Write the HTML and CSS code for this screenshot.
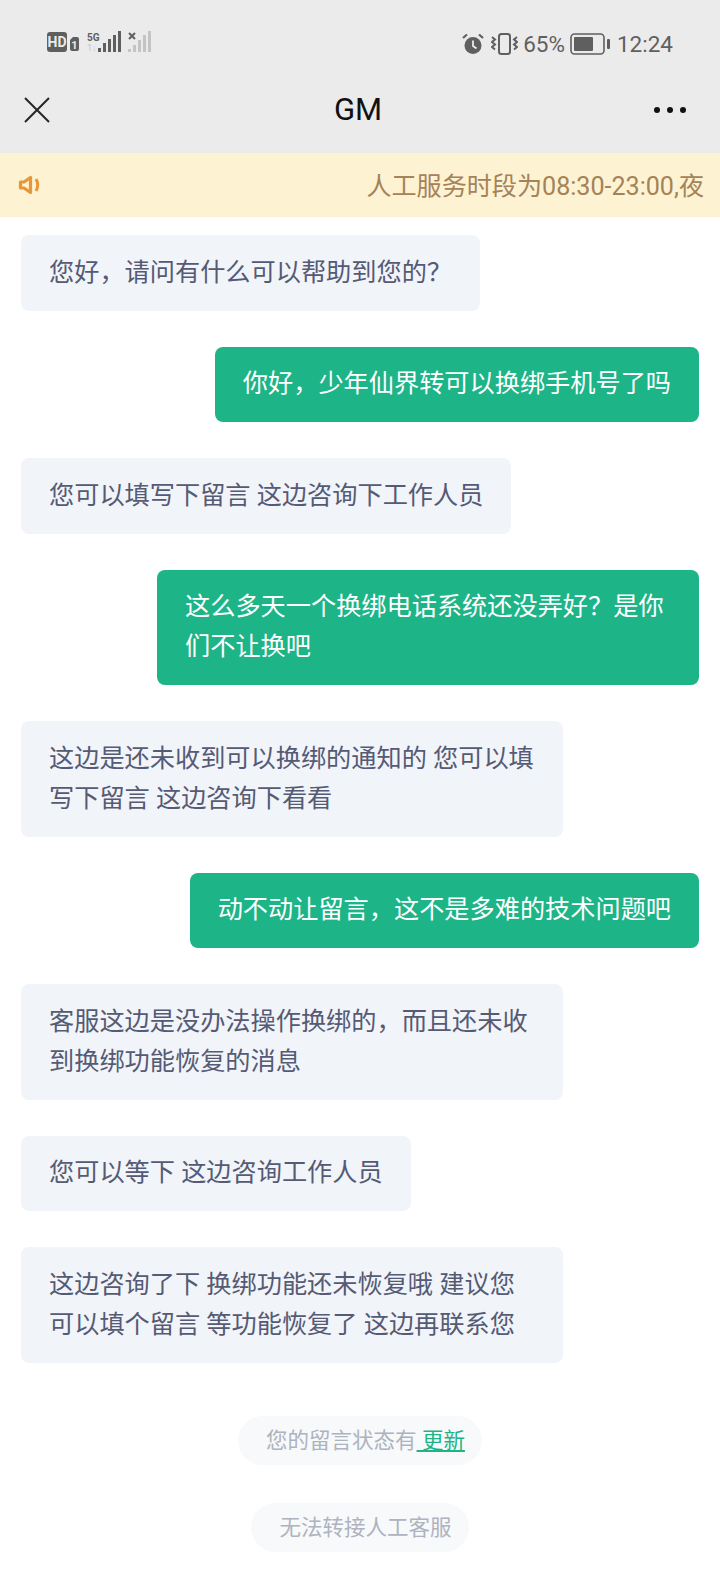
FILE: index.html
```html
<!DOCTYPE html>
<html lang="zh-CN">
<head>
  <meta charset="UTF-8">
  <title>GM</title>
  <link rel="stylesheet" href="styles.css">
</head>
<body>

  <!-- Status bar -->
  <div class="statusbar">
    <div class="status-left">
      <svg class="hd-icon" width="33" height="20" viewBox="0 0 33 20">
        <rect x="0" y="0" width="20" height="20" rx="3" fill="#5f5f5f"/>
        <text x="10" y="15" class="hd-text" text-anchor="middle">HD</text>
        <path d="M23 8 l3 -3 h4 a2 2 0 0 1 2 2 v10 a2 2 0 0 1 -2 2 h-5 a2 2 0 0 1 -2 -2 z" fill="#5f5f5f"/>
        <text x="27.5" y="16.5" class="sim-text" text-anchor="middle">1</text>
      </svg>
      <svg class="signal" width="34" height="22" viewBox="0 0 34 22">
        <text x="0" y="9.5" class="five-g">5G</text>
        <text x="0" y="20" class="updown">1↓</text>
        <rect x="11" y="17" width="3" height="4" fill="#5f5f5f"/>
        <rect x="16" y="12" width="3" height="9" fill="#5f5f5f"/>
        <rect x="21" y="8" width="3" height="13" fill="#5f5f5f"/>
        <rect x="26" y="4" width="3" height="17" fill="#5f5f5f"/>
        <rect x="31" y="0" width="3" height="21" fill="#5f5f5f"/>
      </svg>
      <svg class="signal-off" width="23" height="22" viewBox="0 0 23 22">
        <path d="M1 2 l6 6 M7 2 l-6 6" stroke="#5f5f5f" stroke-width="2"/>
        <rect x="0" y="18" width="3" height="3" fill="#c4c4c4"/>
        <rect x="5" y="14" width="3" height="7" fill="#c4c4c4"/>
        <rect x="10" y="9" width="3" height="12" fill="#c4c4c4"/>
        <rect x="15" y="4" width="3" height="17" fill="#c4c4c4"/>
        <rect x="20" y="0" width="3" height="21" fill="#c4c4c4"/>
      </svg>
    </div>
    <div class="status-right">
      <svg width="22" height="22" viewBox="0 0 22 22">
        <circle cx="11" cy="12.5" r="8.5" fill="#5f5f5f"/>
        <path d="M11 7.500 v5.500 l3.500 2.500" stroke="#ebebeb" stroke-width="1.800" fill="none"/>
        <path d="M1 5 l4 -3.500 M21 5 l-4 -3.500" stroke="#5f5f5f" stroke-width="2.200" fill="none"/>
      </svg>
      <svg class="vibrate" width="27" height="22" viewBox="0 0 27 22">
        <rect x="8" y="1" width="11" height="20" rx="2.500" fill="none" stroke="#5f5f5f" stroke-width="2"/>
        <path d="M1 4 l3 2.500 -3 2.500 3 2.500 -3 2.500 3 2.500" fill="none" stroke="#5f5f5f" stroke-width="2"/>
        <path d="M26 4 l-3 2.500 3 2.500 -3 2.500 3 2.500 -3 2.500" fill="none" stroke="#5f5f5f" stroke-width="2"/>
      </svg>
      <span class="battery-pct">65%</span>
      <svg class="battery" width="40" height="22" viewBox="0 0 40 22">
        <rect x="1" y="1" width="33" height="20" rx="3.500" fill="none" stroke="#5f5f5f" stroke-width="1.600"/>
        <rect x="4" y="4" width="19" height="14" rx="1" fill="#5f5f5f"/>
        <rect x="37" y="6" width="3" height="10" rx="1" fill="#5f5f5f"/>
      </svg>
      <span class="clock">12:24</span>
    </div>
  </div>

  <!-- Title bar -->
  <div class="titlebar">
    <svg width="26" height="26" viewBox="0 0 26 26">
      <path d="M1 1 L25 25 M25 1 L1 25" stroke="#262626" stroke-width="2" fill="none"/>
    </svg>
    <div class="title">GM</div>
    <div class="more"><i></i><i></i><i></i></div>
  </div>

  <!-- Notice -->
  <div class="notice">
    <svg width="23" height="20" viewBox="0 0 23 20">
      <path d="M2.500 7 h3.500 l6.500 -4.500 v15 l-6.500 -4.500 h-3.500 z" fill="none" stroke="#e8963a" stroke-width="3.200" stroke-linejoin="round"/>
      <path d="M18 4 q3.500 6 0 12" fill="none" stroke="#e8963a" stroke-width="3"/>
    </svg>
    <div class="notice-text">人工服务时段为08:30-23:00,夜</div>
  </div>

  <!-- Messages -->
  <main class="chat">
    <div class="msg them">您好，请问有什么可以帮助到您的？</div>
    <div class="msg me">你好，少年仙界转可以换绑手机号了吗</div>
    <div class="msg them">您可以填写下留言 这边咨询下工作人员</div>
    <div class="msg me">这么多天一个换绑电话系统还没弄好？是你们不让换吧</div>
    <div class="msg them">这边是还未收到可以换绑的通知的 您可以填写下留言 这边咨询下看看</div>
    <div class="msg me">动不动让留言，这不是多难的技术问题吧</div>
    <div class="msg them">客服这边是没办法操作换绑的，而且还未收到换绑功能恢复的消息</div>
    <div class="msg them">您可以等下 这边咨询工作人员</div>
    <div class="msg them">这边咨询了下 换绑功能还未恢复哦 建议您可以填个留言 等功能恢复了 这边再联系您</div>
  </main>

  <!-- Bottom tips -->
  <div class="tips">
    <div class="tip tip-update">您的留言状态有<a class="tip-link" href="#"> 更新</a></div>
    <div class="tip tip-noagent">无法转接人工客服</div>
  </div>

</body>
</html>
```

FILE: styles.css
```css
* {
  box-sizing: border-box;
}
html, body {
  margin: 0;
  height: 1592px;
  overflow: hidden;
}
body {
  background-color: #fff;
  font-family: Roboto, "Noto Sans CJK SC", sans-serif;
}
svg {
  display: block;
  flex: none;
}

/* status bar */
.statusbar {
  height: 72px;
  padding: 30px 47px 0 47px;
  background-color: #ebebeb;
  display: flex;
  justify-content: space-between;
  align-items: flex-start;
}
.status-left {
  display: flex;
  align-items: center;
  gap: 7px;
  height: 24px;
}
.status-right {
  display: flex;
  align-items: center;
  height: 28px;
  color: #5f5f5f;
  font-size: 22px;
}
.hd-text {
  font: bold 14px Roboto, sans-serif;
  fill: #ebebeb;
}
.sim-text {
  font: bold 11px Roboto, sans-serif;
  fill: #ebebeb;
}
.five-g {
  font: bold 10px "Liberation Sans Narrow", Roboto, sans-serif;
  fill: #5f5f5f;
}
.updown {
  font: 9px Roboto, sans-serif;
  fill: #c4c4c4;
}
.vibrate {
  margin-left: 7px;
}
.battery-pct {
  margin-left: 5px;
  font-size: 22.5px;
}
.battery {
  margin-left: 5px;
}
.clock {
  margin-left: 7px;
  font-size: 22.5px;
}

/* title bar */
.titlebar {
  height: 81px;
  padding: 0 34px 6px 24px;
  background-color: #ebebeb;
  display: flex;
  align-items: center;
  justify-content: space-between;
}
.title {
  font-size: 31px;
  color: #111;
  margin-left: 12px;
}
.more {
  display: flex;
  gap: 7px;
}
.more i {
  width: 6px;
  height: 6px;
  border-radius: 50%;
  background-color: #111;
}

/* notice */
.notice {
  height: 64px;
  padding: 0 16px 0 18px;
  background-color: #fdf2d2;
  display: flex;
  align-items: center;
  justify-content: space-between;
}
.notice-text {
  font-size: 25.1px;
  color: #a58257;
  margin-top: -2px;
}

/* chat */
.chat {
  padding: 18px 21px 0 21px;
  display: flex;
  flex-direction: column;
  gap: 36px;
}
.msg {
  max-width: 542px;
  padding: 17.75px 28px;
  border-radius: 8px;
  font-size: 25.2px;
  line-height: 40px;
}
.them {
  align-self: flex-start;
  background-color: #f1f4f8;
  color: #555a75;
}
.me {
  align-self: flex-end;
  background-color: #1db488;
  color: #fff;
}

/* tips */
.tips {
  margin-top: 53px;
  display: flex;
  flex-direction: column;
  align-items: center;
  gap: 38px;
}
.tip {
  height: 49px;
  border-radius: 25px;
  background-color: #f7f9fb;
  color: #aeb3bf;
  font-size: 21.5px;
  line-height: 49px;
  padding: 0 17px 0 28px;
}
.tip-link {
  color: #1db488;
}
```
